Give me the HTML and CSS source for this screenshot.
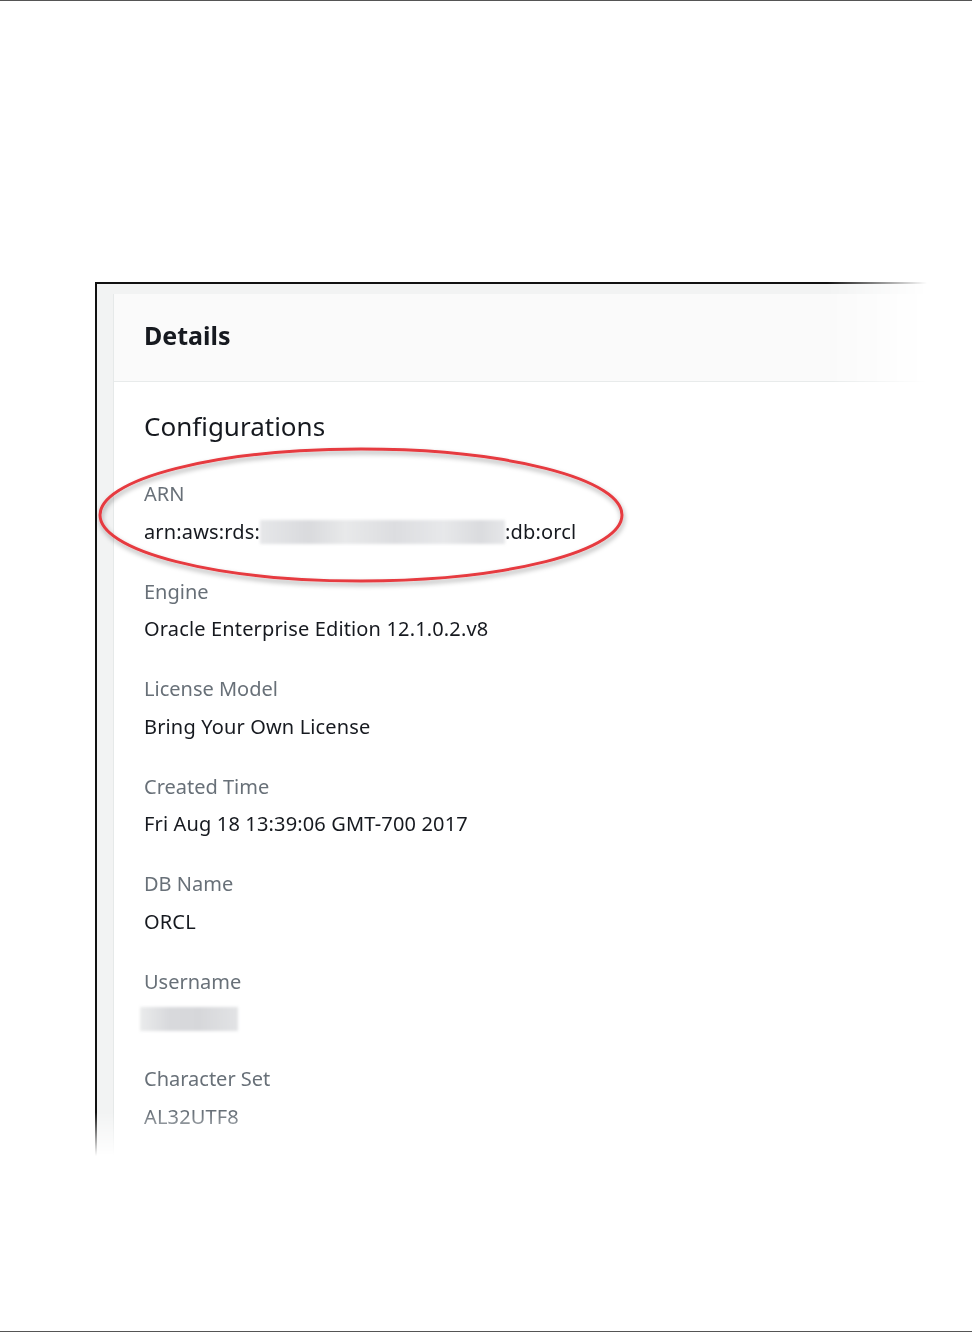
FILE: index.html
```html
<!DOCTYPE html>
<html>
<head>
<meta charset="utf-8">
<link rel="stylesheet" href="styles.css">
</head>
<body>
<div class="page">
  <div class="shot-h">
    <div class="shot">
      <div class="panel">
        <div class="panel-head"><h2 class="title">Details</h2></div>
        <div class="panel-body">
          <h3 class="subtitle">Configurations</h3>
          <dl class="fields">
            <div class="field">
              <dt class="label">ARN</dt>
              <dd class="value">arn:aws:rds:<span class="blur blur-arn"></span>:db:orcl</dd>
            </div>
            <div class="field">
              <dt class="label">Engine</dt>
              <dd class="value">Oracle Enterprise Edition 12.1.0.2.v8</dd>
            </div>
            <div class="field">
              <dt class="label">License Model</dt>
              <dd class="value">Bring Your Own License</dd>
            </div>
            <div class="field">
              <dt class="label">Created Time</dt>
              <dd class="value">Fri Aug 18 13:39:06 GMT-700 2017</dd>
            </div>
            <div class="field">
              <dt class="label">DB Name</dt>
              <dd class="value">ORCL</dd>
            </div>
            <div class="field">
              <dt class="label">Username</dt>
              <dd class="value"><span class="blur blur-user"></span></dd>
            </div>
            <div class="field">
              <dt class="label">Character Set</dt>
              <dd class="value muted">AL32UTF8</dd>
            </div>
          </dl>
        </div>
      </div>
    </div>
  </div>
  <svg class="ring" width="560" height="170" viewBox="0 0 560 170">
    <defs>
      <filter id="sh" x="-10%" y="-20%" width="120%" height="140%">
        <feDropShadow dx="1" dy="3" stdDeviation="2.5" flood-color="#000" flood-opacity="0.35"/>
      </filter>
    </defs>
    <ellipse cx="266" cy="79" rx="261" ry="66" fill="none" stroke="#e63a40" stroke-width="3" filter="url(#sh)"/>
  </svg>
</div>
</body>
</html>
```
FILE: styles.css
```css
* { box-sizing: border-box; }
html, body { margin: 0; padding: 0; background: #fff; }
body { font-family: "Noto Sans", "Open Sans", sans-serif; }
.page {
  position: relative;
  width: 972px;
  height: 1332px;
  border-top: 1px solid #555;
  border-bottom: 1px solid #555;
  padding-top: 281px;
  overflow: hidden;
}
.shot-h {
  margin-left: 95px;
  width: 832px;
  -webkit-mask-image: linear-gradient(to right, #000 88%, transparent 100%);
  mask-image: linear-gradient(to right, #000 88%, transparent 100%);
}
.shot {
  height: 874px;
  border-left: 2px solid #111;
  border-top: 2px solid #111;
  background: #f2f3f3;
  padding: 10px 0 0 16px;
  -webkit-mask-image: linear-gradient(to bottom, #000 95%, transparent 100%);
  mask-image: linear-gradient(to bottom, #000 95%, transparent 100%);
}
.panel {
  height: 100%;
  background: #fff;
  border-left: 1px solid #e6e9e9;
}
.panel-head {
  height: 88px;
  background: #fafafa;
  border-bottom: 1px solid #e8ebeb;
  display: flex;
  align-items: center;
  padding: 0 0 6px 30px;
}
.title {
  margin: 0;
  font-size: 25px;
  font-weight: 700;
  color: #16191f;
  line-height: 32px;
}
.panel-body { padding: 24px 0 0 30px; }
.subtitle {
  margin: 0 0 34px;
  font-size: 26px;
  font-weight: 400;
  color: #16191f;
  line-height: 40px;
}
.fields { margin: 0; display: flex; flex-direction: column; gap: 32px; }
.field { display: flex; flex-direction: column; gap: 9.5px; }
.label {
  margin: 0;
  font-size: 20px;
  line-height: 28px;
  color: #687078;
}
.value {
  margin: 0;
  font-size: 20px;
  line-height: 28px;
  min-height: 28px;
  color: #16191f;
  display: flex;
  align-items: center;
  letter-spacing: 0.15px;
}
.value.muted { color: #687078; }
.blur {
  display: inline-block;
  background: linear-gradient(to right, #e6e7e9, #d9dadd 20%, #e8e9ea 35%, #dcdde0 55%, #e7e8ea 75%, #dadbde 90%, #e6e7e9);
  filter: blur(1.5px);
}
.blur-arn { width: 245px; height: 24px; }
.blur-user {
  width: 98px;
  height: 24px;
  margin-left: -4px;
  background: linear-gradient(to right, #eaebec, #d8d9dc 30%, #d6d7da 60%, #e2e3e5);
}
.ring {
  position: absolute;
  left: 95px;
  top: 435px;
}
```
